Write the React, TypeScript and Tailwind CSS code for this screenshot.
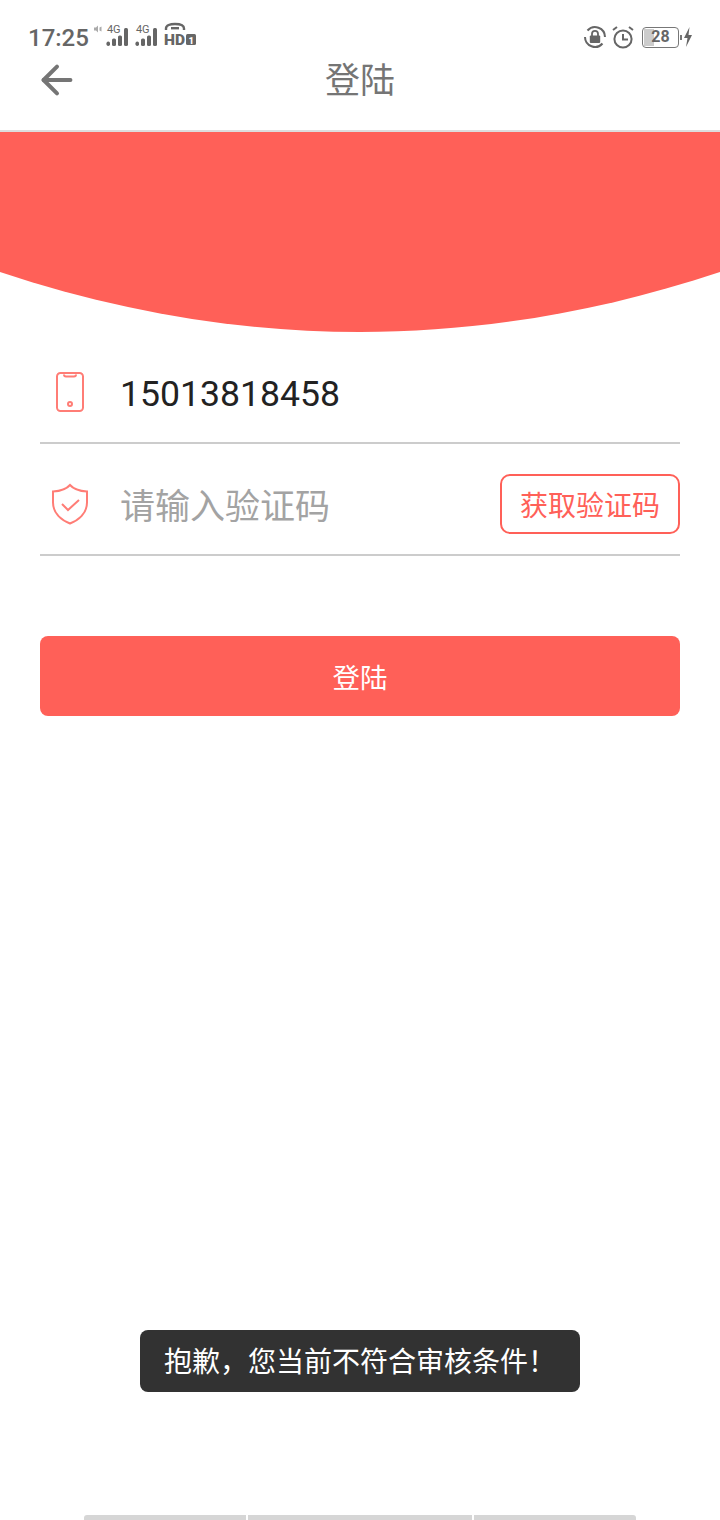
import { ArrowLeft } from "lucide-react"

const font = "font-['Roboto','Noto_Sans_CJK_SC',sans-serif]"

function Signal() {
  return (
    <div className="relative h-[22px] w-[24px]">
      <span className="absolute left-[1px] top-0 text-[11px] leading-[10px] text-[#666]">4G</span>
      <svg width="24" height="22" viewBox="0 0 24 22" className="absolute left-0 top-0" fill="#666">
        <rect x="0.500" y="16.500" width="3.500" height="4.500" rx="1.700" />
        <rect x="6" y="13.500" width="4" height="7.500" rx="1.500" />
        <rect x="12" y="10.500" width="4" height="10.500" rx="1.500" />
        <rect x="18" y="3" width="4" height="18" rx="1.500" />
      </svg>
    </div>
  )
}

function StatusBar() {
  return (
    <div className="flex h-[50px] items-end justify-between pl-[28px] pr-[27px]">
      <div className="flex items-center translate-y-[3px]">
        <span className="pt-[6px] text-[24px] leading-[30px] font-medium text-[#666]">17:25</span>
        <svg width="10" height="10" viewBox="0 0 10 10" className="mb-[12px] ml-[4px]" fill="#aaa">
          <path d="M1 3.500h2l2-2v7l-2-2H1zM6.500 3.500l2-1v5l-2-1z" />
        </svg>
        <div className="ml-[3px] flex gap-[5px] pt-[1px]">
          <Signal />
          <Signal />
        </div>
        <svg width="34" height="28" viewBox="0 0 34 28" className="ml-[5px]" fill="none">
          <path d="M2 9V7.500C2 4.500 6 3 11 3s9 1.500 9 4.500V9" stroke="#666" strokeWidth="2.400" />
          <rect x="7" y="6" width="8" height="2.400" fill="#666" />
          <text x="0" y="24" fontSize="15" fontWeight="900" fill="#666" textLength="21" lengthAdjust="spacingAndGlyphs">
            HD
          </text>
          <rect x="22" y="13" width="10" height="11" rx="1.500" fill="#666" />
          <text x="24.500" y="22.500" fontSize="9.500" fontWeight="800" fill="#fff">
            1
          </text>
        </svg>
      </div>
      <div className="flex items-center">
        <svg width="24" height="24" viewBox="0 0 24 24" fill="none">
          <path d="M22 12A10 10 0 0 0 4.500 5.500M2 12a10 10 0 0 0 17.500 6.500" stroke="#666" strokeWidth="2" />
          <rect x="6.800" y="10.500" width="10.400" height="7.500" rx="1" fill="#666" />
          <path d="M9 11V8.800a3 3 0 0 1 6 0V11" stroke="#666" strokeWidth="1.800" />
        </svg>
        <svg width="24" height="26" viewBox="0 0 24 26" className="ml-[4px]" fill="none" stroke="#666">
          <circle cx="12" cy="15" r="8.600" strokeWidth="2" />
          <path d="M12 10v5.500h5" strokeWidth="2" />
          <path d="M2 6l4-3M22 6l-4-3" strokeWidth="2" />
        </svg>
        <div className="relative ml-[7px] flex h-[21px] w-[37px] items-center justify-center overflow-hidden rounded-[4px] border border-[#777]">
          <div className="absolute bottom-[1px] left-[1px] top-[1px] w-[10px] bg-[#ccc]" />
          <span className="relative text-[16px] font-bold leading-none text-[#666]">28</span>
        </div>
        <div className="ml-[1px] h-[5px] w-[2px] bg-[#777]" />
        <svg width="10" height="20" viewBox="0 0 10 20" className="ml-[1px]" fill="#666">
          <path d="M6.500 0L1 11h3.500L3 20l6-12H5.500z" />
        </svg>
      </div>
    </div>
  )
}

export default function App() {
  return (
    <div className={`${font} relative flex h-[1520px] w-[720px] flex-col overflow-hidden bg-white`}>
      <div className="h-[132px] border-b-2 border-[#dddddd]">
        <StatusBar />
        <div className="relative flex h-[60px] items-center justify-center">
          <ArrowLeft size={46} strokeWidth={2.100} color="#757575" className="absolute left-[34px] top-[7px]" />
          <span className="pt-[4px] text-[35px] leading-[60px] text-[#757575]">登陆</span>
        </div>
      </div>

      <svg width="720" height="200" viewBox="0 0 720 200" className="block shrink-0">
        <path d="M0 0H720V140C600 180 480 200 360 200S120 180 0 140Z" fill="#ff6058" />
      </svg>

      <div className="flex flex-col px-[40px]">
        <div className="flex h-[112px] items-center border-b-2 border-[#cccccc] pt-[10px]">
          <div className="flex w-[60px] justify-center">
            <svg width="30" height="42" viewBox="0 0 30 42" fill="none" stroke="#ff7d76" strokeWidth="2">
              <rect x="2" y="2" width="26" height="38" rx="3.500" />
              <path d="M9 3.500c0 1.500 1 2 2 2h8c1 0 2-.5 2-2" />
              <circle cx="15" cy="33" r="2" />
            </svg>
          </div>
          <span className="ml-[20px] pt-[6px] text-[35.600px] leading-none text-[#222222]">15013818458</span>
        </div>

        <div className="flex h-[112px] items-center justify-between border-b-2 border-[#cccccc] pt-[10px]">
          <div className="flex items-center">
            <div className="flex w-[60px] justify-center">
              <svg width="38" height="42" viewBox="0 0 38 42" fill="none" stroke="#ff7d76" strokeWidth="2">
                <path d="M19 2c3 3.500 9 6 17 6.500v11C36 30 28 37 19 40.500 10 37 2 30 2 19.500v-11C10 8 16 5.500 19 2z" />
                <path d="M11 21l6 6 11-10" />
              </svg>
            </div>
            <span className="ml-[20px] pt-[6px] text-[35px] leading-none text-[#a3a3a3]">请输入验证码</span>
          </div>
          <button className="h-[60px] w-[180px] rounded-[10px] border-2 border-[#ff6058] pt-[6px] text-[28px] leading-none text-[#ff6058]">
            获取验证码
          </button>
        </div>

        <button className="mt-[80px] h-[80px] rounded-[8px] bg-[#ff6058] pt-[6px] text-[27.500px] text-white">登陆</button>
      </div>

      <div className="absolute left-[140px] top-[1330px] flex h-[62px] items-center rounded-[8px] bg-[#323232] px-[24px] pt-[4px] text-[28px] leading-none text-white">
        抱歉，您当前不符合审核条件！
      </div>

      <div className="absolute bottom-0 left-[84px] flex h-[5px] w-[552px] gap-[2px]">
        <div className="w-[162px] rounded-tl-[3px] bg-[#d6d6d6]" />
        <div className="w-[224px] bg-[#d6d6d6]" />
        <div className="flex-1 rounded-tr-[3px] bg-[#d6d6d6]" />
      </div>
    </div>
  )
}
